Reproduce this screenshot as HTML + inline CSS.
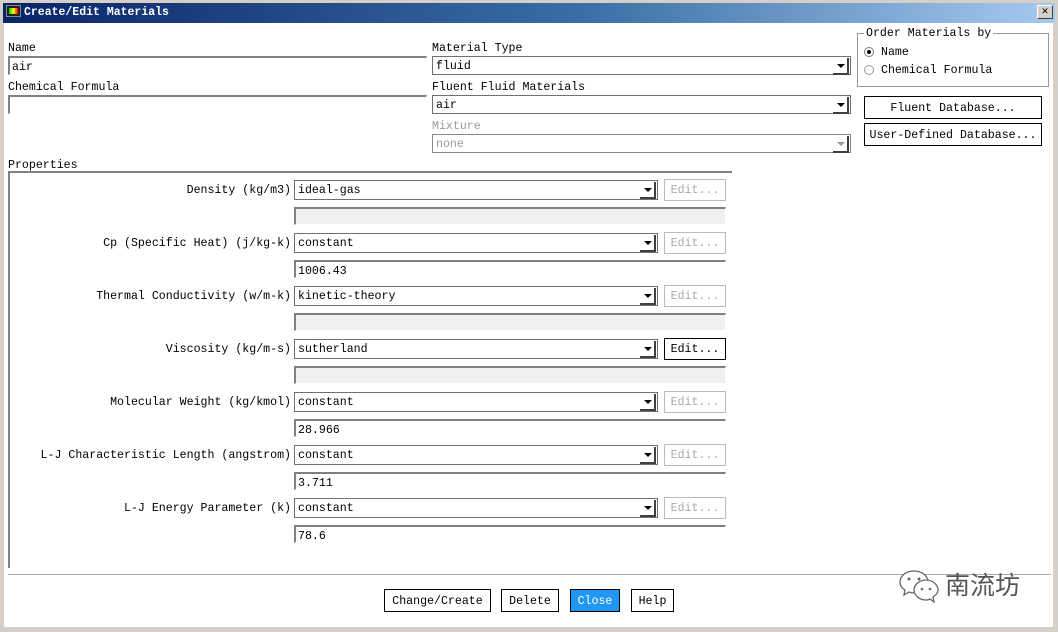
<!DOCTYPE html>
<html><head><meta charset="utf-8"><style>
*{box-sizing:border-box;margin:0;padding:0}
body{width:1058px;height:632px;background:#d4d0c8;position:relative;overflow:hidden;font-family:"Liberation Mono",monospace;font-size:11.6px;color:#000}
.a{position:absolute;white-space:pre}
#title{left:0;top:0;width:1058px;height:23px;background:linear-gradient(90deg,#0a246a 0%,#3a6ea5 55%,#a6caf0 100%);border:3px solid #d4d0c8;border-bottom:0}
#body{left:4px;top:23px;width:1049px;height:604px;background:#fff}
.tf{position:absolute;background:#fff;border-top:2px solid #808080;border-left:2px solid #808080;border-right:1px solid #fff;border-bottom:1px solid #fff;padding-left:2px;padding-top:1px;line-height:17px}
.dd{position:absolute;background:#fff;border:1px solid #707070;padding-left:3px;padding-top:1px;line-height:17px}
.dd:after{content:"";position:absolute;right:1px;top:1px;width:14px;height:15px;border-right:2px solid #404040;border-bottom:2px solid #404040}
.dd i{position:absolute;right:5px;top:7px;border-left:4px solid transparent;border-right:4px solid transparent;border-top:4px solid #000}
.dd.g{color:#999;border-color:#888}.dd.g i{border-top-color:#999}
.btn{position:absolute;border:1px solid #000;background:#fff;text-align:center}
.eb{position:absolute;border:1px solid #bbb;color:#aaa;text-align:center;line-height:22px;width:62px;height:22px;left:664px}
.gray{background:#f0f0f0}
.l{line-height:24px!important}
</style></head><body>
<div class="a" id="title"></div>
<div class="a" style="left:6px;top:5px;width:15px;height:12px;background:#222;border:1px solid #888"><div style="margin:2px;width:9px;height:6px;background:linear-gradient(90deg,#0c0,#ff0,#f00)"></div></div>
<div class="a" style="left:24px;top:6px;color:#fff;font-weight:bold;font-size:11.5px">Create/Edit Materials</div>
<div class="a" style="left:1037px;top:5px;width:16px;height:14px;background:#d4d0c8;border:1px solid;border-color:#fff #404040 #404040 #fff;font-size:11px;line-height:12px;text-align:center;font-weight:bold">✕</div>
<div class="a" id="body"></div>

<div class="a" style="left:8px;top:42px">Name</div>
<div class="tf" style="left:8px;top:56px;width:419px;height:19px">air</div>
<div class="a" style="left:8px;top:81px">Chemical Formula</div>
<div class="tf" style="left:8px;top:95px;width:419px;height:19px"></div>

<div class="a" style="left:432px;top:42px">Material Type</div>
<div class="dd" style="left:432px;top:56px;width:419px;height:19px">fluid<i></i></div>
<div class="a" style="left:432px;top:81px">Fluent Fluid Materials</div>
<div class="dd" style="left:432px;top:95px;width:419px;height:19px">air<i></i></div>
<div class="a" style="left:432px;top:120px;color:#999">Mixture</div>
<div class="dd g" style="left:432px;top:134px;width:419px;height:19px">none<i></i></div>

<div class="a" style="left:857px;top:33px;width:192px;height:54px;border:1px solid #999"></div>
<div class="a" style="left:864px;top:27px;background:#fff;padding:0 2px">Order Materials by</div>
<div class="a" style="left:864px;top:47px;width:10px;height:10px;border-radius:50%;border:1px solid #777"><div style="margin:2px;width:4px;height:4px;border-radius:50%;background:#000"></div></div>
<div class="a" style="left:881px;top:46px">Name</div>
<div class="a" style="left:864px;top:65px;width:10px;height:10px;border-radius:50%;border:1px solid #999"></div>
<div class="a" style="left:881px;top:64px">Chemical Formula</div>
<div class="btn" style="left:864px;top:96px;width:178px;height:23px;line-height:23px">Fluent Database...</div>
<div class="btn" style="left:864px;top:123px;width:178px;height:23px;line-height:23px">User-Defined Database...</div>

<div class="a" style="left:8px;top:159px">Properties</div>
<div class="a" style="left:8px;top:171px;width:724px;height:397px;border-top:2px solid #808080;border-left:2px solid #808080"></div>

<div class="a l" style="left:0;top:179px;width:291px;text-align:right">Density (kg/m3)</div>
<div class="dd" style="left:294px;top:180px;width:364px;height:20px">ideal-gas<i></i></div>
<div class="eb" style="top:179px">Edit...</div>
<div class="tf gray" style="left:294px;top:207px;width:432px;height:18px"></div>

<div class="a l" style="left:0;top:232px;width:291px;text-align:right">Cp (Specific Heat) (j/kg-k)</div>
<div class="dd" style="left:294px;top:233px;width:364px;height:20px">constant<i></i></div>
<div class="eb" style="top:232px">Edit...</div>
<div class="tf" style="left:294px;top:260px;width:432px;height:18px">1006.43</div>

<div class="a l" style="left:0;top:285px;width:291px;text-align:right">Thermal Conductivity (w/m-k)</div>
<div class="dd" style="left:294px;top:286px;width:364px;height:20px">kinetic-theory<i></i></div>
<div class="eb" style="top:285px">Edit...</div>
<div class="tf gray" style="left:294px;top:313px;width:432px;height:18px"></div>

<div class="a l" style="left:0;top:338px;width:291px;text-align:right">Viscosity (kg/m-s)</div>
<div class="dd" style="left:294px;top:339px;width:364px;height:20px">sutherland<i></i></div>
<div class="eb" style="top:338px;color:#000;border-color:#000">Edit...</div>
<div class="tf gray" style="left:294px;top:366px;width:432px;height:18px"></div>

<div class="a l" style="left:0;top:391px;width:291px;text-align:right">Molecular Weight (kg/kmol)</div>
<div class="dd" style="left:294px;top:392px;width:364px;height:20px">constant<i></i></div>
<div class="eb" style="top:391px">Edit...</div>
<div class="tf" style="left:294px;top:419px;width:432px;height:18px">28.966</div>

<div class="a l" style="left:0;top:444px;width:291px;text-align:right">L-J Characteristic Length (angstrom)</div>
<div class="dd" style="left:294px;top:445px;width:364px;height:20px">constant<i></i></div>
<div class="eb" style="top:444px">Edit...</div>
<div class="tf" style="left:294px;top:472px;width:432px;height:18px">3.711</div>

<div class="a l" style="left:0;top:497px;width:291px;text-align:right">L-J Energy Parameter (k)</div>
<div class="dd" style="left:294px;top:498px;width:364px;height:20px">constant<i></i></div>
<div class="eb" style="top:497px">Edit...</div>
<div class="tf" style="left:294px;top:525px;width:432px;height:18px">78.6</div>

<div class="a" style="left:8px;top:574px;width:1043px;height:1px;background:#aaa"></div>
<div class="btn" style="left:384px;top:589px;width:107px;height:23px;line-height:23px">Change/Create</div>
<div class="btn" style="left:501px;top:589px;width:58px;height:23px;line-height:23px">Delete</div>
<div class="btn" style="left:570px;top:589px;width:50px;height:23px;line-height:23px;background:#2196f3;color:#fff">Close</div>
<div class="btn" style="left:631px;top:589px;width:43px;height:23px;line-height:23px">Help</div>

<svg class="a" style="left:898px;top:568px" width="44" height="36" viewBox="0 0 44 36">
<g fill="#fff" stroke="#666" stroke-width="1.3">
<path d="M16 3C8 3 2 8 2 14c0 4 2 6 5 8l-1 5 5-3c2 1 4 1 5 1C24 25 30 20 30 14S24 3 16 3z"/>
<path d="M28 12c-7 0-12 5-12 10s5 10 12 10c1 0 3 0 4-1l4 3-1-5c3-2 5-4 5-7 0-5-5-10-12-10z"/>
</g>
<circle cx="11" cy="11" r="1.5" fill="#666"/><circle cx="21" cy="11" r="1.5" fill="#666"/>
<circle cx="24" cy="21" r="1.3" fill="#666"/><circle cx="32" cy="21" r="1.3" fill="#666"/>
</svg>
<div class="a" style="left:945px;top:567px;font-family:'Noto Sans CJK SC',sans-serif;font-size:25px;color:#555;line-height:34px">南流坊</div>
</body></html>
